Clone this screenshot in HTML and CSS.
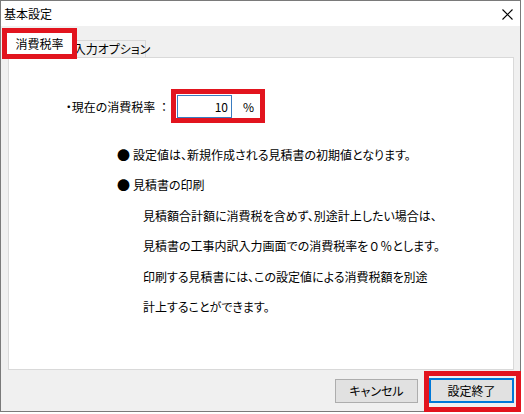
FILE: index.html
```html
<!DOCTYPE html>
<html lang="ja">
<head>
<meta charset="utf-8">
<title>基本設定</title>
<link rel="stylesheet" href="styles.css">
</head>
<body>
<div class="window">
  <div class="titlebar">
    <span class="title">基本設定</span>
    <svg class="close" width="11" height="11" viewBox="0 0 11 11"><path d="M0.5 0.5 L10.5 10.5 M10.5 0.5 L0.5 10.5" stroke="#000" stroke-width="1.1" fill="none"/></svg>
  </div>
  <div class="body">
    <div class="tabs">
      <div class="tab tab-active annot">消費税率</div>
      <div class="tab tab-inactive">入力オプション</div>
    </div>
    <div class="panel">
      <div class="rate-row">
        <span class="rate-label">・現在の消費税率 <span class="full">：</span></span>
        <span class="rate-box annot">
          <span class="rate-input">10</span>
          <span class="pct">%</span>
        </span>
      </div>
      <div class="notes">
        <div class="note"><span class="dot">●</span>設定値は、新規作成される見積書の初期値となります。</div>
        <div class="note"><span class="dot">●</span>見積書の印刷</div>
        <div class="sub">見積額合計額に消費税を含めず、別途計上したい場合は、</div>
        <div class="sub">見積書の工事内訳入力画面での消費税率を<span class="full">０％</span>とします。</div>
        <div class="sub">印刷する見積書には、この設定値による消費税額を別途</div>
        <div class="sub">計上することができます。</div>
      </div>
    </div>
    <div class="buttons">
      <button class="btn btn-cancel">キャンセル</button>
      <span class="ok-wrap annot"><button class="btn btn-ok">設定終了</button></span>
    </div>
  </div>
</div>
</body>
</html>
```
FILE: styles.css
```css
html, body {
  margin: 0;
  padding: 0;
  background: #ffffff;
}
body {
  font-family: "Noto Sans CJK JP", "Noto Sans", sans-serif;
  font-size: 12px;
  color: #000;
  font-feature-settings: "palt";
}
.full {
  font-feature-settings: normal;
}
.window {
  width: 521px;
  height: 412px;
  box-sizing: border-box;
  border: 1px solid #7a7a7a;
  background: #f0f0f0;
  display: flex;
  flex-direction: column;
}
.titlebar {
  height: 25px;
  background: #ffffff;
  display: flex;
  align-items: center;
  justify-content: space-between;
  padding: 0 7px 0 3px;
  flex: none;
}
.title {
  font-size: 12px;
  line-height: 1;
  font-feature-settings: normal;
}
.close {
  display: block;
  margin-top: 1px;
}
.body {
  flex: 1;
  display: flex;
  flex-direction: column;
  padding: 0 6px 0 7px;
}
.annot {
  outline: 5px solid #e2141e;
  position: relative;
  z-index: 2;
}
.tabs {
  height: 31px;
  display: flex;
  align-items: flex-end;
  flex: none;
}
.tab {
  box-sizing: border-box;
  display: flex;
  align-items: center;
  justify-content: center;
  line-height: 1;
  white-space: nowrap;
}
.tab-active {
  width: 65px;
  height: 21px;
  margin: 0 0 3px -1px;
  background: #ffffff;
  font-feature-settings: normal;
  padding-top: 1px;
}
.tab-inactive {
  height: 17px;
  width: 74px;
  padding: 0 0 0 6px;
  border: 1px solid #d9d9d9;
  border-bottom: none;
  background: #f0f0f0;
  position: relative;
  z-index: 1;
}
.panel {
  height: 313px;
  box-sizing: border-box;
  background: #ffffff;
  border: 1px solid #d9d9d9;
  flex: none;
}
.rate-row {
  display: flex;
  align-items: center;
  margin-top: 36px;
  height: 24px;
}
.rate-label {
  width: 167px;
  box-sizing: border-box;
  padding-right: 6px;
  text-align: right;
  white-space: nowrap;
}
.rate-box {
  width: 84px;
  height: 24px;
  box-sizing: border-box;
  padding: 1px 0 0 1px;
  display: flex;
  align-items: flex-start;
}
.rate-input {
  width: 55px;
  height: 23px;
  box-sizing: border-box;
  border: 1px solid #3a7cc0;
  display: flex;
  align-items: center;
  justify-content: flex-end;
  padding-right: 3px;
  line-height: 1;
}
.pct {
  margin-left: 11px;
  height: 23px;
  display: flex;
  align-items: center;
  line-height: 1;
}
.notes {
  margin-top: 22px;
  padding-left: 108px;
}
.note, .sub {
  height: 30.4px;
  line-height: 30.4px;
  white-space: nowrap;
}
.dot {
  display: inline-block;
  width: 16px;
  font-size: 13px;
  font-feature-settings: normal;
}
.sub {
  padding-left: 26px;
}
.buttons {
  display: flex;
  justify-content: flex-end;
  align-items: flex-start;
  margin-top: 8px;
  gap: 11px;
}
.btn {
  font-family: "Noto Sans CJK JP", "Noto Sans", sans-serif;
  font-size: 12px;
  font-feature-settings: "palt";
  background: #e1e1e1;
  color: #000;
  margin: 0;
  padding: 0;
  line-height: 1;
  box-sizing: border-box;
}
.btn-cancel {
  width: 83px;
  height: 24px;
  border: 1px solid #adadad;
  margin-top: 1px;
}
.ok-wrap {
  display: block;
  padding: 2px 2px 4px 0;
  margin-top: -2px;
  margin-right: -2px;
}
.btn-ok {
  display: block;
  width: 85px;
  height: 25px;
  border: 2px solid #0078d7;
  font-feature-settings: normal;
}
```
